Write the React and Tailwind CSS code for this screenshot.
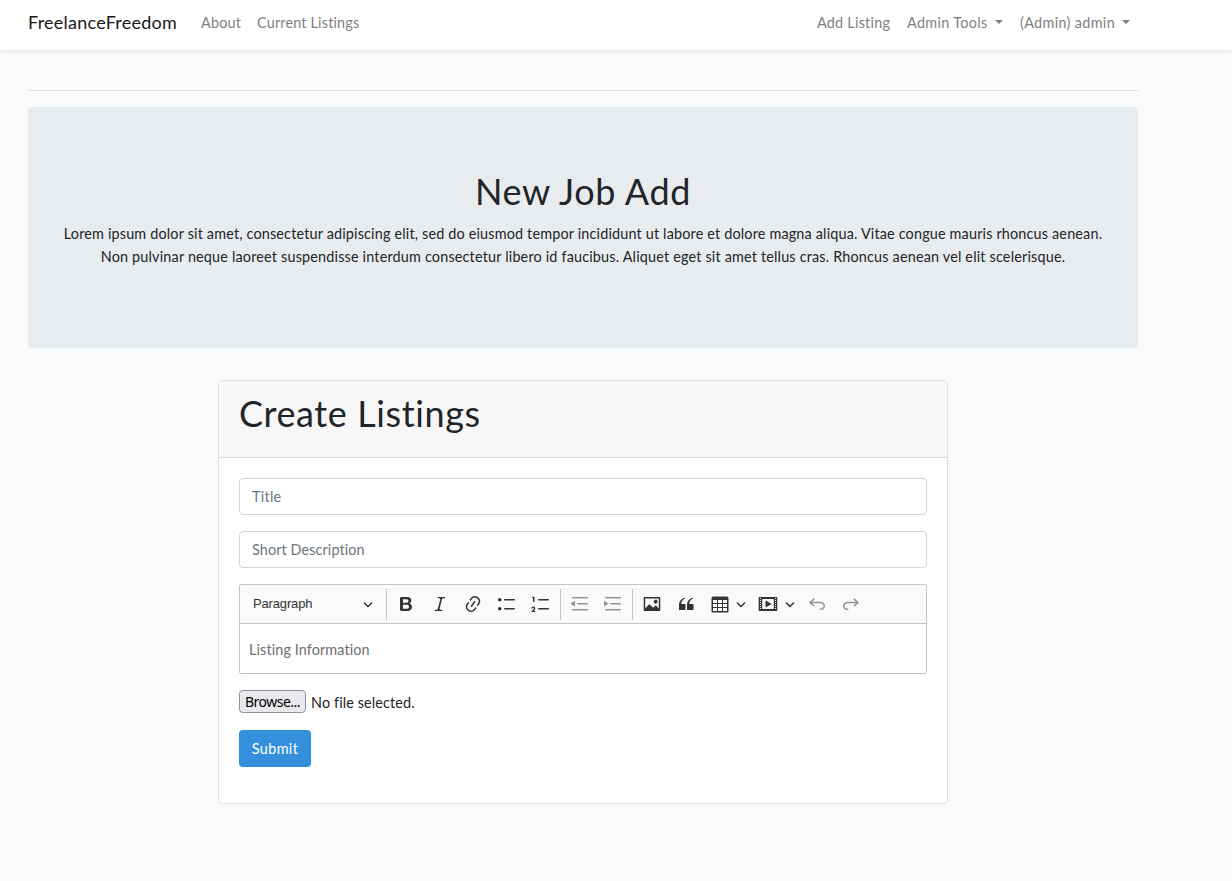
import React from 'react';

const LINES_OUT =
  'M2 3.75c0 .414.336.75.75.75h14.5a.75.75 0 1 0 0-1.5H2.75a.75.75 0 0 0-.75.75zm5 6c0 .414.336.75.75.75h9.5a.75.75 0 1 0 0-1.5h-9.5a.75.75 0 0 0-.75.75zM2.75 16.5h14.5a.75.75 0 1 0 0-1.5H2.75a.75.75 0 1 0 0 1.5z';

const ICONS = {
  bold: 'M10.187 17H5.773c-.637 0-1.092-.138-1.364-.415-.273-.277-.409-.718-.409-1.323V4.738c0-.617.14-1.062.419-1.332.279-.27.73-.406 1.354-.406h4.68c.69 0 1.288.041 1.793.124.506.083.96.242 1.36.478.341.197.644.447.906.75a3.262 3.262 0 0 1 .808 2.162c0 1.401-.722 2.426-2.167 3.075C15.05 10.175 16 11.315 16 13.01a3.756 3.756 0 0 1-2.296 3.504 6.1 6.1 0 0 1-1.517.377c-.571.073-1.238.11-2 .11zm-.217-6.217H7v4.087h3.069c1.977 0 2.965-.69 2.965-2.072 0-.707-.256-1.22-.768-1.537-.512-.319-1.277-.478-2.296-.478zM7 5.13v3.619h2.606c.729 0 1.292-.067 1.69-.2a1.6 1.6 0 0 0 .91-.765c.165-.267.247-.566.247-.897 0-.707-.26-1.176-.778-1.409-.519-.232-1.31-.348-2.375-.348H7z',
  italic: 'm9.586 14.633.021.004c-.036.335.095.655.393.962.082.083.173.15.274.201h1.474a.6.6 0 1 1 0 1.2H5.304a.6.6 0 0 1 0-1.2h1.15c.474-.07.809-.182 1.005-.334.157-.122.291-.32.404-.597l2.416-9.55a1.053 1.053 0 0 0-.281-.823 1.12 1.12 0 0 0-.442-.296H8.15a.6.6 0 0 1 0-1.2h6.443a.6.6 0 1 1 0 1.2h-1.195c-.376.056-.65.155-.823.296-.215.175-.423.439-.623.79l-2.366 9.347z',
  link: 'm11.077 15 .991-1.416a.75.75 0 1 1 1.229.86l-1.148 1.64a.748.748 0 0 1-.217.206 5.251 5.251 0 0 1-8.503-5.955.741.741 0 0 1 .12-.274l1.147-1.639a.75.75 0 1 1 1.228.86L4.933 10.7l.006.003a3.75 3.75 0 0 0 6.132 4.294l.006.004zm5.494-5.335a.748.748 0 0 1-.12.274l-1.147 1.639a.75.75 0 1 1-1.228-.86l.86-1.23a3.75 3.75 0 0 0-6.144-4.301l-.86 1.229a.75.75 0 0 1-1.229-.86l1.148-1.64a.748.748 0 0 1 .217-.206 5.251 5.251 0 0 1 8.503 5.955zm-4.563-2.532a.75.75 0 0 1 .184 1.045l-3.155 4.505a.75.75 0 1 1-1.229-.86l3.155-4.506a.75.75 0 0 1 1.045-.184z',
  bullets: 'M7 5.75c0 .414.336.75.75.75h9.5a.75.75 0 1 0 0-1.5h-9.5a.75.75 0 0 0-.75.75zm-6 0C1 4.784 1.777 4 2.75 4c.966 0 1.75.777 1.75 1.75 0 .966-.777 1.75-1.75 1.75C1.784 7.5 1 6.723 1 5.75zm6 9c0 .414.336.75.75.75h9.5a.75.75 0 1 0 0-1.5h-9.5a.75.75 0 0 0-.75.75zm-6 0c0-.966.777-1.75 1.75-1.75.966 0 1.75.777 1.75 1.75 0 .966-.777 1.75-1.75 1.75-.966 0-1.75-.777-1.75-1.75z',
  numbers: 'M7 5.75c0 .414.336.75.75.75h9.5a.75.75 0 1 0 0-1.5h-9.5a.75.75 0 0 0-.75.75zM3.5 3v5H2V3.7H1v-1h2.5V3zM.343 17.857l2.59-3.257H2.92a.6.6 0 1 0-1.04 0H.302a2 2 0 1 1 3.995 0h-.001c-.048.405-.16.734-.333.988-.175.254-.59.692-1.244 1.312H4.3v1h-4l.043-.043zM7 14.75a.75.75 0 0 1 .75-.75h9.5a.75.75 0 1 1 0 1.5h-9.5a.75.75 0 0 1-.75-.75z',
  outdent: LINES_OUT + 'M4.368 6.95.98 9.358a.4.4 0 0 0 .013.661l3.39 2.207A.4.4 0 0 0 5 11.892V7.275a.4.4 0 0 0-.632-.326z',
  indent: LINES_OUT + 'M1.632 6.95 5.02 9.358a.4.4 0 0 1-.013.661l-3.39 2.207A.4.4 0 0 1 1 11.892V7.275a.4.4 0 0 1 .632-.326z',
  image: 'M6.91 10.54c.26-.23.64-.21.88.03l3.36 3.14 2.23-2.06a.64.64 0 0 1 .87 0l2.52 2.97V4.5H3.2v10.12l3.71-4.08zm10.27-7.51c.6 0 1.09.47 1.09 1.05v11.84c0 .59-.49 1.06-1.09 1.06H2.79c-.6 0-1.09-.47-1.09-1.06V4.08c0-.58.49-1.05 1.1-1.05h14.38zm-5.22 5.56a1.96 1.96 0 1 1 3.4-1.96 1.96 1.96 0 0 1-3.4 1.96z',
  quote: 'M3 10.423a6.5 6.5 0 0 1 6.056-6.408l.038.67C6.448 5.423 5.354 7.663 5.22 10H9c.552 0 .5.432.5.986v4.511c0 .554-.448.503-1 .503h-5c-.552 0-.5-.449-.5-1.003v-4.574zm8 0a6.5 6.5 0 0 1 6.056-6.408l.038.67c-2.646.739-3.74 2.979-3.873 5.315H17c.552 0 .5.432.5.986v4.511c0 .554-.448.503-1 .503h-5c-.552 0-.5-.449-.5-1.003v-4.574z',
  table: 'M3 6v3h4V6H3zm0 4v3h4v-3H3zm0 4v3h4v-3H3zm5 3h4v-3H8v3zm5 0h4v-3h-4v3zm4-4v-3h-4v3h4zm0-4V6h-4v3h4zm1.5 8a1.5 1.5 0 0 1-1.5 1.5H3A1.5 1.5 0 0 1 1.5 17V4c.222-.863 1.068-1.5 2-1.5h13c.932 0 1.778.637 2 1.5v13zM12 13v-3H8v3h4zm0-4V6H8v3h4z',
  media: 'M18.68 3.03c.6 0 .59-.03.59.55v12.84c0 .59.01.56-.59.56H1.29c-.6 0-.59.03-.59-.56V3.58c0-.58-.01-.55.6-.55h17.38zM15.77 15V5H4.2v10h11.57zM2 4v1h1V4H2zm0 2v1h1V6H2zm0 2v1h1V8H2zm0 2v1h1v-1H2zm0 2v1h1v-1H2zm0 2v1h1v-1H2zM17 4v1h1V4h-1zm0 2v1h1V6h-1zm0 2v1h1V8h-1zm0 2v1h1v-1h-1zm0 2v1h1v-1h-1zm0 2v1h1v-1h-1zM7.5 7.177a.4.4 0 0 1 .593-.351l5.133 2.824a.4.4 0 0 1 0 .7l-5.133 2.824a.4.4 0 0 1-.593-.35V7.176v.001z',
  undo: 'm5.042 9.367 2.189 1.837a.75.75 0 0 1-.965 1.149l-3.788-3.18a.747.747 0 0 1-.21-.284.75.75 0 0 1 .17-.945L6.23 4.762a.75.75 0 1 1 .964 1.15L4.863 7.866h8.917A.75.75 0 0 1 14 7.9a4 4 0 1 1-1.477 7.718l.344-1.489a2.5 2.5 0 1 0 1.094-4.73l.008-.032H5.042z',
};

function Tool({ name, className = '' }) {
  return (
    <button type="button" aria-label={name} className={`flex h-[31px] w-8 shrink-0 items-center justify-center ${className}`}>
      <svg viewBox="0 0 20 20" className="size-5" fill="#333333">
        <path fillRule={name === 'table' || name === 'media' ? 'evenodd' : 'nonzero'} d={ICONS[name]} />
      </svg>
    </button>
  );
}

function Chevron({ className = '' }) {
  return (
    <svg viewBox="0 0 10 10" className={`size-[10px] shrink-0 ${className}`} fill="#333333">
      <path d="M.941 4.523a.75.75 0 1 1 1.06-1.06l3.006 3.005 3.005-3.005a.75.75 0 1 1 1.06 1.06l-3.549 3.55a.75.75 0 0 1-1.168-.136L.941 4.523z" />
    </svg>
  );
}

function Separator({ className = '' }) {
  return <span className={`h-[31px] w-px shrink-0 bg-[#c4c4c4] ${className}`} />;
}

function Caret() {
  return (
    <span className="mb-[5px] ml-[7px] inline-block border-x-[4.32px] border-t-[4.32px] border-x-transparent border-t-[#7f7f7f] align-middle" />
  );
}

function Navbar() {
  return (
    <nav className="flex h-[50px] items-center bg-white pl-7 text-[14.4px] leading-[23px] text-[#7f7f7f] shadow-[0_2px_4px_rgba(0,0,0,0.075)]">
      <div className="flex w-[1110px] items-center pb-[5px]">
        <a className="w-[173px] text-[18px] leading-[29px] tracking-[0.24px] text-[#191919]">FreelanceFreedom</a>
        <a className="w-14 tracking-[0.18px]">About</a>
        <a className="tracking-[0.18px]">Current Listings</a>
        <div className="ml-auto flex pr-2">
          <a className="w-[90px] tracking-[0.24px]">Add Listing</a>
          <a className="w-[113px] tracking-[0.33px]">Admin Tools<Caret /></a>
          <a className="tracking-[0.34px]">(Admin) admin<Caret /></a>
        </div>
      </div>
    </nav>
  );
}

function Toolbar() {
  return (
    <div className="flex h-[39px] items-center border-b border-[#c4c4c4] bg-[#fafafa]">
      <button
        type="button"
        className="flex h-[31px] w-[146px] items-center justify-between px-[13px] font-['Liberation_Sans',sans-serif] text-[13px] tracking-[-0.15px] text-[#333333]"
      >
        <span className="pb-[2px]">Paragraph</span>
        <Chevron />
      </button>
      <Separator />
      <div className="ml-[3px] flex gap-[1.7px]">
        <Tool name="bold" />
        <Tool name="italic" />
        <Tool name="link" />
        <Tool name="bullets" />
        <Tool name="numbers" />
      </div>
      <Separator className="ml-[3.2px]" />
      <div className="ml-[3px] flex gap-[1.4px]">
        <Tool name="outdent" className="opacity-50" />
        <Tool name="indent" className="opacity-50" />
      </div>
      <Separator className="ml-[2.6px]" />
      <div className="ml-[3.1px] flex items-center gap-[2px]">
        <Tool name="image" />
        <Tool name="quote" />
        <Tool name="table" />
        <Chevron className="-ml-[2px]" />
        <Tool name="media" className="ml-[4px]" />
        <Chevron className="-ml-[1.5px]" />
        <Tool name="undo" className="ml-[4.5px] opacity-50" />
        <Tool name="undo" className="-scale-x-100 opacity-50" />
      </div>
    </div>
  );
}

export default function App() {
  return (
    <div className="min-h-[881px] bg-[#f8fafc] font-['Lato',sans-serif] text-[14.4px] leading-[23px] text-[#212529]">
      <Navbar />
      <main className="ml-7 w-[1110px]">
        <hr className="mt-10 border-t border-[#dee1e3]" />
        <section className="mt-4 h-[241px] rounded bg-[#e9ecef] pt-[63px] text-center">
          <h1 className="mb-[9px] text-[36px] leading-[43px] tracking-[0.65px]">New Job Add</h1>
          <p className="whitespace-nowrap tracking-[0.17px]">
            Lorem ipsum dolor sit amet, consectetur adipiscing elit, sed do eiusmod tempor incididunt ut labore et dolore magna aliqua. Vitae congue mauris rhoncus aenean.
          </p>
          <p className="whitespace-nowrap tracking-[0.18px]">
            Non pulvinar neque laoreet suspendisse interdum consectetur libero id faucibus. Aliquet eget sit amet tellus cras. Rhoncus aenean vel elit scelerisque.
          </p>
        </section>

        <section className="mx-auto mt-8 h-[424px] w-[730px] overflow-hidden rounded border border-[#dfdfdf] bg-white">
          <header className="h-[77px] border-b border-[#d9d9d9] bg-[#f7f7f7] px-5 pt-[11px]">
            <h1 className="text-[36px] leading-[43px] tracking-[0.6px]">Create Listings</h1>
          </header>
          <form className="flex flex-col items-start gap-4 px-5 pt-5">
            <input
              placeholder="Title"
              className="h-[37px] w-full rounded border border-[#ced4da] px-3 tracking-[0.28px] placeholder:text-[#6c757d]"
            />
            <input
              placeholder="Short Description"
              className="h-[37px] w-full rounded border border-[#ced4da] px-3 tracking-[0.1px] placeholder:text-[#6c757d]"
            />
            <div className="h-[90px] w-full rounded-[2px] border border-[#c4c4c4]">
              <Toolbar />
              <p className="px-[9px] pt-[14px] tracking-[0.11px] text-[#707070]">Listing Information</p>
            </div>
            <div className="flex h-6 items-start">
              <button
                type="button"
                className="flex h-[23px] w-[67px] items-center justify-center rounded border border-[#8f8f9d] bg-[#e9e9ed] font-['Noto_Sans',sans-serif] text-[14px] tracking-[-0.5px] text-black"
              >
                Browse...
              </button>
              <span className="ml-[5px] pt-px tracking-[0.12px]">No file selected.</span>
            </div>
            <button type="button" className="h-[37px] w-[72px] rounded-[4px] bg-[#3490dc] text-center tracking-[0.38px] text-white">
              Submit
            </button>
          </form>
        </section>
      </main>
    </div>
  );
}
